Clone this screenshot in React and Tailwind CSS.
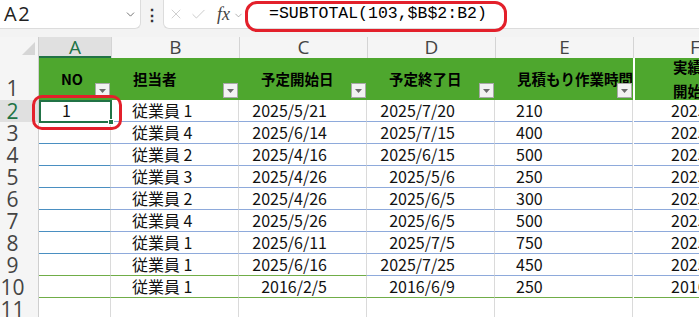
import { X, Check, ChevronDown } from "lucide-react";

const jp = { fontFamily: '"Noto Sans CJK JP", "Noto Sans", sans-serif' };
const ui = { fontFamily: '"Open Sans", "Noto Sans", sans-serif' };

const rows = [
  ["1", "従業員 1", "2025/5/21", "2025/7/20", "210", "2025/5/21"],
  ["", "従業員 4", "2025/6/14", "2025/7/15", "400", "2025/6/14"],
  ["", "従業員 2", "2025/4/16", "2025/6/15", "500", "2025/4/16"],
  ["", "従業員 3", "2025/4/26", "2025/5/6", "250", "2025/4/26"],
  ["", "従業員 2", "2025/4/26", "2025/6/5", "300", "2025/4/26"],
  ["", "従業員 4", "2025/5/26", "2025/6/5", "500", "2025/5/26"],
  ["", "従業員 1", "2025/6/11", "2025/7/5", "750", "2025/6/11"],
  ["", "従業員 1", "2025/6/16", "2025/7/25", "450", "2025/6/16"],
  ["", "従業員 1", "2016/2/5", "2016/6/9", "250", "2016/2/5"],
];

const Filter = () => (
  <span className="absolute right-[1px] bottom-[2px] w-[15px] h-[15px] bg-[#f2f2f2] border border-[#a8a8a8] flex items-center justify-center">
    <svg width="7" height="4" viewBox="0 0 7 4">
      <path d="M0 0h7L3.5 4z" fill="#6b6b6b" />
    </svg>
  </span>
);

function RowHead({ n, selected, tall }) {
  return (
    <div
      className={`w-[39px] shrink-0 border-r border-[#cfcfcf] flex justify-center pr-[13px] text-[21px] leading-[22px] ${
        tall ? "items-end pb-[1px]" : "items-center"
      } ${selected ? "bg-[#e0e0e0] text-[#217346]" : "bg-[#f5f5f5] text-[#444]"}`}
      style={ui}
    >
      {n}
    </div>
  );
}

export default function App() {
  return (
    <div className="relative w-[699px] h-[317px] overflow-hidden bg-white">
      {/* name box + formula bar */}
      <div className="h-[37px] bg-[#f3f3f3] pb-[7px]">
        <div className="flex h-[30px]">
          <div className="w-[141px] shrink-0 h-[29px] bg-white border-r border-b border-[#dcdcdc] rounded-br-[6px] flex items-center pl-[4px] pr-[3px]">
            <span className="text-[20px] tracking-[1.5px] text-[#222] flex-1" style={ui}>
              A2
            </span>
            <ChevronDown size={13} strokeWidth={1.5} color="#555" />
          </div>
          <div className="w-[22px] shrink-0 flex items-center justify-center text-[#333] text-[16px] font-bold">⋮</div>
          <div className="flex-1 h-[29px] bg-white border-l border-b border-[#dcdcdc] rounded-bl-[6px] flex items-center pl-[4px]">
            <X size={16} strokeWidth={1.1} color="#bdbdbd" />
            <Check size={17} strokeWidth={1.1} color="#bdbdbd" className="ml-[6px]" />
            <span className="ml-[10px] text-[18px] italic text-[#444]" style={{ fontFamily: '"Liberation Serif", serif' }}>
              fx
            </span>
            <ChevronDown size={11} strokeWidth={1.4} color="#888" className="ml-[3px] mt-[2px]" />
            <span className="ml-[25px] text-[16.5px] text-black" style={{ fontFamily: '"Liberation Mono", monospace' }}>
              =SUBTOTAL(103,$B$2:B2)
            </span>
          </div>
        </div>
      </div>

      {/* column letters */}
      <div className="flex h-[21px] bg-[#f5f5f5] text-[19px] text-[#444] leading-[21px]" style={ui}>
        <div className="w-[39px] shrink-0 border-r border-[#cfcfcf] flex items-end justify-end pr-[3px] pb-[3px]">
          <svg width="13" height="13" viewBox="0 0 13 13">
            <path d="M13 0V13H0z" fill="#d6d6d6" />
          </svg>
        </div>
        <div className="w-[72px] shrink-0 text-center bg-[#e0e0e0] text-[#217346] border-b-2 border-[#217346]">A</div>
        <div className="w-[128px] shrink-0 text-center border-l border-[#d4d4d4]">B</div>
        <div className="w-[128px] shrink-0 text-center border-l border-[#d4d4d4]">C</div>
        <div className="w-[128px] shrink-0 text-center border-l border-[#d4d4d4]">D</div>
        <div className="w-[138px] shrink-0 text-center border-l border-[#d4d4d4]">E</div>
        <div className="w-[200px] shrink-0 border-l border-[#d4d4d4] pl-[56px]">F</div>
      </div>

      {/* header row */}
      <div className="flex h-[42px]">
        <RowHead n="1" tall />
        <div className="flex text-[14.5px] font-bold text-black" style={jp}>
          {["NO", "担当者", "予定開始日", "予定終了日"].map((t, i) => (
            <div
              key={t}
              className={`relative shrink-0 ${i === 0 ? "w-[72px]" : "w-[128px]"} bg-[#4ea72e] flex items-center pl-[22px]`}
            >
              {t}
              <Filter />
            </div>
          ))}
          <div className="relative w-[138px] shrink-0 bg-[#4ea72e] flex items-center pl-[22px] whitespace-nowrap">
            見積もり作業時間
            <Filter />
          </div>
          <div className="w-[2px] shrink-0 bg-white" />
          <div className="w-[100px] shrink-0 bg-[#4ea72e] flex flex-col justify-center pl-[38px] leading-[24px]">
            <span>実績</span>
            <span>開始</span>
          </div>
        </div>
      </div>

      {/* data rows */}
      {rows.map((r, i) => {
        const last = i === rows.length - 1;
        const nine = i === rows.length - 2;
        const a = last || nine ? "border-b-[#70ad47]" : "border-b-[#4a8fc1]";
        const mid = last || nine ? "border-b-[#70ad47]" : "border-b-[#8eaadb]";
        const right = last ? "border-b-[#70ad47]" : "border-b-[#8eaadb]";
        return (
          <div key={i} className="flex h-[22px] text-[16px] text-[#111] leading-[21px]" style={jp}>
            <RowHead n={i + 2} selected={i === 0} />
            <div className={`w-[72px] shrink-0 border-b border-r border-r-[#dadada] ${a} pl-[23px]`}>{r[0]}</div>
            <div className={`w-[128px] shrink-0 border-b border-r border-r-[#dadada] ${mid} pl-[21px]`}>{r[1]}</div>
            <div className={`w-[128px] shrink-0 border-b border-r border-r-[#dadada] ${mid} text-right pr-[39px]`}>{r[2]}</div>
            <div className={`w-[128px] shrink-0 border-b border-r border-r-[#dadada] ${right} text-right pr-[39px]`}>{r[3]}</div>
            <div className={`w-[138px] shrink-0 border-b border-r border-r-[#dadada] ${right} pl-[21px]`}>{r[4]}</div>
            <div className="w-[1px] shrink-0" />
            <div className={`w-[100px] shrink-0 border-b ${right} pl-[37px] whitespace-nowrap overflow-hidden`}>{r[5]}</div>
          </div>
        );
      })}

      {/* empty row 11 */}
      <div className="flex h-[22px]">
        <RowHead n="11" />
        <div className="w-[72px] shrink-0 border-r border-[#dadada]" />
        <div className="w-[128px] shrink-0 border-r border-[#dadada]" />
        <div className="w-[128px] shrink-0 border-r border-[#dadada]" />
        <div className="w-[128px] shrink-0 border-r border-[#dadada]" />
        <div className="w-[138px] shrink-0 border-r border-[#dadada]" />
      </div>

      {/* active cell selection */}
      <div className="absolute left-[39px] top-[100px] w-[73px] h-[23px] border-2 border-[#217346]">
        <span className="absolute -right-[4px] -bottom-[4px] w-[6px] h-[6px] bg-[#217346] border border-white" />
      </div>

      {/* red annotation marks */}
      <div className="absolute left-[245px] top-[1px] w-[262px] h-[31px] border-[3px] border-[#e3202b] rounded-[12px]" />
      <div className="absolute left-[32px] top-[95px] w-[90px] h-[35px] border-[3px] border-[#e3202b] rounded-[10px]" />
    </div>
  );
}
